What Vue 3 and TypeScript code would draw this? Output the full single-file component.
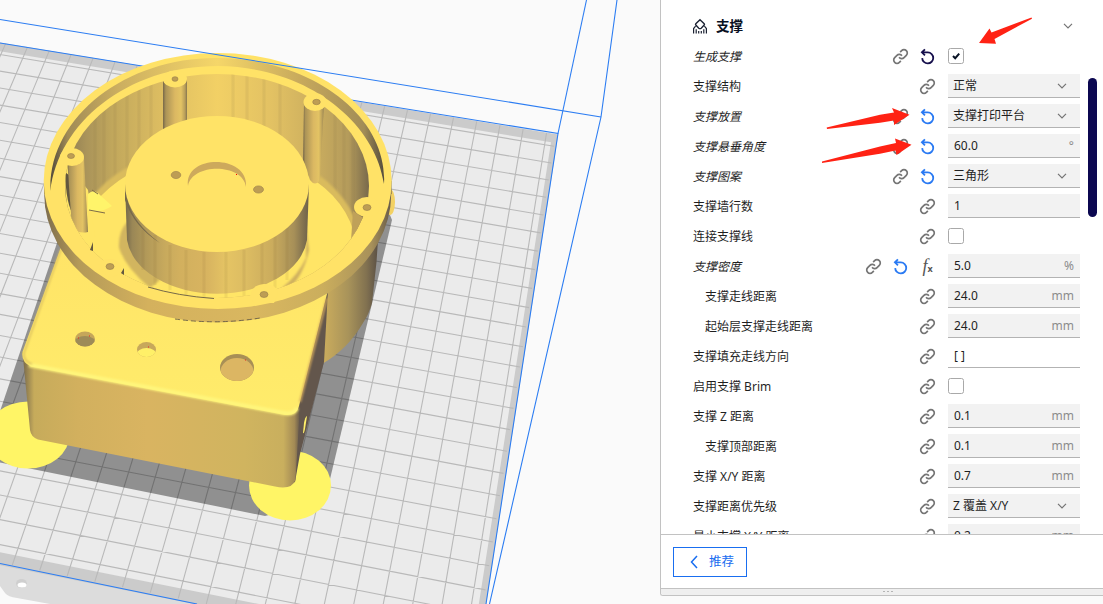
<script setup lang="ts">
type Point = [number, number]
type Icon = 'link' | 'undo' | 'undo-dark' | 'fx'
interface Setting {
  label: string
  kind: 'check' | 'select' | 'input' | 'plain'
  icons: Icon[]
  value?: string
  unit?: string
  checked?: boolean
  changed?: boolean
  child?: boolean
}

const settings: Setting[] = [
  { label: '生成支撑', kind: 'check', icons: ['link', 'undo-dark'], checked: true, changed: true },
  { label: '支撑结构', kind: 'select', icons: ['link'], value: '正常' },
  { label: '支撑放置', kind: 'select', icons: ['link', 'undo'], value: '支撑打印平台', changed: true },
  { label: '支撑悬垂角度', kind: 'input', icons: ['link', 'undo'], value: '60.0', unit: '°', changed: true },
  { label: '支撑图案', kind: 'select', icons: ['link', 'undo'], value: '三角形', changed: true },
  { label: '支撑墙行数', kind: 'input', icons: ['link'], value: '1' },
  { label: '连接支撑线', kind: 'check', icons: ['link'] },
  { label: '支撑密度', kind: 'input', icons: ['link', 'undo', 'fx'], value: '5.0', unit: '%', changed: true },
  { label: '支撑走线距离', kind: 'input', icons: ['link'], value: '24.0', unit: 'mm', child: true },
  { label: '起始层支撑走线距离', kind: 'input', icons: ['link'], value: '24.0', unit: 'mm', child: true },
  { label: '支撑填充走线方向', kind: 'plain', icons: ['link'], value: '[ ]' },
  { label: '启用支撑 Brim', kind: 'check', icons: ['link'] },
  { label: '支撑 Z 距离', kind: 'input', icons: ['link'], value: '0.1', unit: 'mm' },
  { label: '支撑顶部距离', kind: 'input', icons: ['link'], value: '0.1', unit: 'mm', child: true },
  { label: '支撑 X/Y 距离', kind: 'input', icons: ['link'], value: '0.7', unit: 'mm' },
  { label: '支撑距离优先级', kind: 'select', icons: ['link'], value: 'Z 覆盖 X/Y' },
  { label: '最小支撑 X/Y 距离', kind: 'input', icons: ['link'], value: '0.2', unit: 'mm' },
]

// Build plate in perspective: four grid nodes fix the projection of the whole grid.
function cross(a: Point, b: Point, c: Point, d: Point): Point {
  const den = (a[0] - b[0]) * (c[1] - d[1]) - (a[1] - b[1]) * (c[0] - d[0])
  const p = a[0] * b[1] - a[1] * b[0]
  const q = c[0] * d[1] - c[1] * d[0]
  return [(p * (c[0] - d[0]) - (a[0] - b[0]) * q) / den, (p * (c[1] - d[1]) - (a[1] - b[1]) * q) / den]
}
const far: [Point, Point] = [[0, 54.5], [553, 146]]
const near: [Point, Point] = [[0, 495], [491, 591]]
const left: [Point, Point] = [[181.7, 72.3], [12.3, 565]]
const right: [Point, Point] = [[546.7, 131.5], [471.7, 603]]
const p0 = cross(...far, ...left)
const p1 = cross(...far, ...right)
const p2 = cross(...near, ...right)
const p3 = cross(...near, ...left)
const sx = p0[0] - p1[0] + p2[0] - p3[0]
const sy = p0[1] - p1[1] + p2[1] - p3[1]
const dx1 = p1[0] - p2[0], dx2 = p3[0] - p2[0]
const dy1 = p1[1] - p2[1], dy2 = p3[1] - p2[1]
const det = dx1 * dy2 - dx2 * dy1
const g = (sx * dy2 - dx2 * sy) / det
const h = (dx1 * sy - sx * dy1) / det
function project(u: number, v: number): string {
  const s = (u - 8) / 16
  const t = v / 22
  const w = g * s + h * t + 1
  const x = ((p1[0] - p0[0] + g * p1[0]) * s + (p3[0] - p0[0] + h * p3[0]) * t + p0[0]) / w
  const y = ((p1[1] - p0[1] + g * p1[1]) * s + (p3[1] - p0[1] + h * p3[1]) * t + p0[1]) / w
  return `${x.toFixed(1)} ${y.toFixed(1)}`
}
function quad(u0: number, v0: number, u1: number, v1: number): string {
  return `M${project(u0, v0)}L${project(u1, v0)}L${project(u1, v1)}L${project(u0, v1)}Z`
}
const plate = quad(-12, -0.73, 24.5, 24.8)
const plateInner = quad(-12, -0.2, 24.25, 24.3)
let grid = ''
for (let u = -10; u <= 24; u++) grid += `M${project(u, -0.7)}L${project(u, 24.7)}`
for (let v = 0; v <= 24; v++) grid += `M${project(-12, v)}L${project(24.4, v)}`
</script>

<template>
  <div class="app">
    <svg class="scene" viewBox="0 0 660 604" width="660" height="604">
      <defs>
        <linearGradient id="wall" gradientUnits="userSpaceOnUse" x1="65" y1="0" x2="370" y2="0">
          <stop offset="0" stop-color="#8d7b52" /><stop offset=".07" stop-color="#aa945a" />
          <stop offset=".16" stop-color="#c2a85c" /><stop offset=".3" stop-color="#dabb61" />
          <stop offset=".5" stop-color="#f2d065" /><stop offset=".68" stop-color="#e2c163" />
          <stop offset=".8" stop-color="#cfb15f" /><stop offset=".93" stop-color="#b49b5b" />
          <stop offset="1" stop-color="#75674b" />
        </linearGradient>
        <linearGradient id="drum" gradientUnits="userSpaceOnUse" x1="125" y1="0" x2="309" y2="0">
          <stop offset="0" stop-color="#74684b" /><stop offset=".04" stop-color="#9a8756" />
          <stop offset=".12" stop-color="#b39a59" /><stop offset=".22" stop-color="#c8aa5d" />
          <stop offset=".3" stop-color="#d2b05e" /><stop offset=".45" stop-color="#d8b460" />
          <stop offset=".55" stop-color="#e5c464" /><stop offset=".66" stop-color="#dcbc62" />
          <stop offset=".8" stop-color="#cbac5d" /><stop offset=".92" stop-color="#a68f58" />
          <stop offset="1" stop-color="#6c604a" />
        </linearGradient>
        <linearGradient id="rimside" gradientUnits="userSpaceOnUse" x1="44" y1="0" x2="392" y2="0">
          <stop offset="0" stop-color="#7c6c4d" /><stop offset=".1" stop-color="#b49a58" />
          <stop offset=".3" stop-color="#d4b15d" /><stop offset=".6" stop-color="#d9b760" />
          <stop offset=".8" stop-color="#cbae5d" /><stop offset=".94" stop-color="#a8915a" />
          <stop offset="1" stop-color="#655948" />
        </linearGradient>
        <linearGradient id="groove" gradientUnits="userSpaceOnUse" x1="51" y1="0" x2="384" y2="0">
          <stop offset="0" stop-color="#554d3d" /><stop offset=".05" stop-color="#a08b56" />
          <stop offset=".2" stop-color="#cbae60" /><stop offset=".5" stop-color="#f5d669" />
          <stop offset=".75" stop-color="#c7a95c" /><stop offset=".94" stop-color="#a28d57" />
          <stop offset="1" stop-color="#554d3d" />
        </linearGradient>
        <linearGradient id="body" gradientUnits="userSpaceOnUse" x1="325" y1="0" x2="377" y2="0">
          <stop offset="0" stop-color="#c9ab5d" /><stop offset=".45" stop-color="#a8935a" />
          <stop offset=".8" stop-color="#817150" /><stop offset="1" stop-color="#5e5346" />
        </linearGradient>
        <linearGradient id="front" gradientUnits="userSpaceOnUse" x1="23" y1="0" x2="300" y2="0">
          <stop offset="0" stop-color="#796a4b" /><stop offset=".04" stop-color="#c6ab5b" />
          <stop offset=".2" stop-color="#d2b05e" /><stop offset=".45" stop-color="#d9b461" />
          <stop offset=".8" stop-color="#d0b45f" /><stop offset=".94" stop-color="#c9af5e" />
          <stop offset=".98" stop-color="#a38a55" /><stop offset="1" stop-color="#65584b" />
        </linearGradient>
        <linearGradient id="post" x1="0" x2="1" y1="0" y2="0">
          <stop offset="0" stop-color="#776849" /><stop offset=".12" stop-color="#ac9457" />
          <stop offset=".5" stop-color="#dbb862" /><stop offset=".75" stop-color="#e3c364" />
          <stop offset=".92" stop-color="#b79d5a" /><stop offset="1" stop-color="#85754f" />
        </linearGradient>
        <linearGradient id="top" x1="0" x2="0" y1="0" y2="1">
          <stop offset="0" stop-color="#ffe367" /><stop offset="1" stop-color="#ffec6b" />
        </linearGradient>
        <clipPath id="cavity"><ellipse cx="217" cy="186" rx="152" ry="112" /></clipPath>
        <clipPath id="hole1"><ellipse cx="85" cy="339" rx="10" ry="7.5" /></clipPath>
        <clipPath id="hole2"><ellipse cx="146.500" cy="349.500" rx="9.500" ry="7.500" /></clipPath>
        <clipPath id="hole3"><ellipse cx="237" cy="367.500" rx="17" ry="13.500" /></clipPath>
        <filter id="soft"><feGaussianBlur stdDeviation="1.3" /></filter>
      </defs>

      <!-- build plate -->
      <path d="M0 560 210 604H50L17 598Q8 597 5 593L0 586Z" fill="#dcdcdc" />
      <ellipse cx="21.500" cy="583.500" rx="5.500" ry="4.500" fill="#cfcfcf" />
      <ellipse cx="22" cy="585" rx="4.500" ry="2.500" fill="#fff" />
      <path :d="plate" fill="#cbcbcb" />
      <path :d="plateInner" fill="#ebebeb" />
      <path :d="grid" stroke="#b9b9b9" stroke-width="1.100" fill="none" />
      <path d="M58 240 -3 420V462L265 516 325 500 392 220 380 190Z" fill="#000" fill-opacity=".39" />
      <g stroke="#2c7df2" stroke-width="1.100" fill="none">
        <path d="M0 43 558 133.500 486 604" />
        <path d="M586.500 0 558 133.500" />
        <path d="M617 0 601 117 489.500 604" />
        <path d="M0 563.500 197 604" />
      </g>

      <!-- brim discs -->
      <ellipse cx="28" cy="435" rx="41.500" ry="33.500" fill="#fff566" />
      <ellipse cx="290" cy="485.500" rx="41" ry="35" fill="#fff566" />

      <!-- cylinder below the rim -->
      <path d="M300 240H378L376.500 262 372 303Q369 314 363 323 348 349 322 364L300 370Z" fill="url(#body)" />

      <!-- box -->
      <path d="M328 290 324 362 300 454 295 482 290 484 296 410 320 300Z" fill="#63564c" />
      <path d="M304 423Q305 417 307 416L305 429Q304 434 303 433Z" fill="#fff06a" />
      <path d="M22.500 352 30 430Q31 437 38 439.500L275 486.500Q292 490 295.500 480L300 405Z" fill="url(#front)" />
      <path d="M61 247 22.500 352Q21 362 31 366.500L285 415Q297 416 299 406L328 290 300 230H80Z" fill="url(#top)" />
      <path d="M29 365 284 413Q294 415 297 408" fill="none" stroke="#fff67c" stroke-width="4" filter="url(#soft)" />
      <path d="M61 249 24 353Q23 361 32 364" fill="none" stroke="#d9bd5e" stroke-width="1.500" filter="url(#soft)" />
      <path d="M327 298 300 402" fill="none" stroke="#d6ab5c" stroke-width="2" filter="url(#soft)" />

      <g clip-path="url(#hole1)"><path d="M70 328H100V350H70Z" fill="#c5a65a" /><ellipse cx="85" cy="344" rx="11" ry="8" fill="#9d8b58" /></g>
      <g clip-path="url(#hole2)"><path d="M130 338H160V360H130Z" fill="#c7a85b" /><ellipse cx="146.500" cy="355" rx="10" ry="7" fill="#fff068" /></g>
      <g clip-path="url(#hole3)"><path d="M218 352H256V384H218Z" fill="#a88f56" /><ellipse cx="237" cy="372" rx="16.500" ry="14" fill="#dcb663" /></g>
      <path d="M78 338h1M89 336h1M148 347h1M245 360h1" stroke="#e22" stroke-width="1" />

      <!-- rim -->
      <ellipse cx="390" cy="202" rx="5" ry="13" fill="#f3d162" />
      <ellipse cx="217.700" cy="194" rx="173.500" ry="128.500" fill="url(#rimside)" />
      <path d="M44 181H391.500V194H44Z" fill="url(#rimside)" />
      <path d="M175 319Q217 325 260 318" fill="none" stroke="#5c5444" stroke-width=".8" stroke-dasharray="5 3" />
      <ellipse cx="217.700" cy="181" rx="174" ry="128" fill="#ffe267" />
      <path d="M50.500 191C48 117 126 57 218 58 315 59 388 118 384 184 375 122 308 67 218 66 126 66 58 124 50.500 191Z" fill="url(#groove)" />

      <!-- cavity -->
      <g clip-path="url(#cavity)">
        <path d="M60 70H375V305H60Z" fill="url(#wall)" />
        <path d="M95 95V200M104 88V195M115 84V180M127 80V170M139 78V160M151 76V150M233 70V150M247 70V150M264 74V150M280 78V160M335 110V200M344 120V210M353 130V220" stroke="#7c6840" stroke-opacity=".1" stroke-width="3" />
        <ellipse cx="217" cy="246" rx="143" ry="101" fill="#d9bb5d" filter="url(#soft)" />
        <ellipse cx="217" cy="250" rx="139" ry="98" fill="#ffe566" />
        <path d="M65 160Q62 240 100 270L94 230 88 190Z" fill="#ffe566" />
        <path d="M88 194Q94 188 100 195L112 206Q100 214 88 210Z" fill="#fff46a" />
        <path d="M89 210 105 213M92 190 98 194" stroke="#7c6b48" stroke-width="1" />
        <path d="M127 222Q118 232 119 248 126 268 150 288L160 280Z" fill="#d2b55e" filter="url(#soft)" />
        <path d="M306 225V258Q298 275 282 288L288 290Q304 275 309 250Z" fill="#cfb05e" filter="url(#soft)" />
        <path d="M163 79H187V140H163Z" fill="url(#post)" />
        <path d="M304 102H324L320 180Q315 187 310 180L303 160Z" fill="url(#post)" />
        <path d="M125 184H309L307 240A90.500 60 0 0 1 127 240Z" fill="url(#drum)" />
        <path d="M143 230V270M155 235V285M170 245V290M186 250V296M204 252V298M226 252V298M244 250V298M262 242V292M275 235V288M287 225V280" stroke="#7c6335" stroke-opacity=".1" stroke-width="3" />
        <path d="M125 184V200Q134 227 160 243 134 224 128 202Z" fill="#76694b" />
        <path d="M65 172 70 176 74 216Q66 205 65 172Z" fill="#62573f" />
        <path d="M67 158H84L88 232Q80 234 72 229Z" fill="url(#post)" />
        <path d="M353 211 351 241Q360 232 365 219Z" fill="#bfa159" />
      </g>
      <path d="M148 287Q178 296 214 298.500" stroke="#695d45" stroke-width=".9" fill="none" />
      <ellipse cx="217" cy="184" rx="92" ry="68" fill="#ffe367" />
      <path d="M188 186C184 154 249 154 246 187 243 163 192 163 188 186Z" fill="#cda95c" />
      <g fill="#ffe267">
        <ellipse cx="175" cy="79" rx="12" ry="8.500" />
        <ellipse cx="315" cy="102" rx="11.500" ry="9" />
        <ellipse cx="72" cy="157" rx="12" ry="9" />
        <ellipse cx="367" cy="207" rx="13" ry="10" />
        <path d="M250 299Q250 285 264 284 277 284 278 294L274 303H255Z" />
        <path d="M98 268Q99 259 110 259 122 259 122 273L110 278Z" />
      </g>
      <path d="M90 250 93 242V251ZM121 273 124 268V275Z" fill="#635840" />
      <g fill="#bd9d54" stroke="#977e4b" stroke-width=".6">
        <ellipse cx="175" cy="79" rx="3" ry="2.300" /><ellipse cx="316.500" cy="102" rx="3.800" ry="2.700" />
        <ellipse cx="71" cy="156" rx="3.500" ry="2.500" /><ellipse cx="367" cy="207.500" rx="4" ry="3" />
        <ellipse cx="110" cy="266.500" rx="4" ry="3" /><ellipse cx="264" cy="294.500" rx="4" ry="3" />
        <ellipse cx="176" cy="175" rx="4.800" ry="3.600" /><ellipse cx="258.500" cy="189.500" rx="5" ry="3.600" />
      </g>
      <path d="M236 174.500h1" stroke="#f00" />
      <path d="M0 19.500 601 117" stroke="#2c7df2" stroke-width="1.100" />
    </svg>

    <aside class="panel">
      <div class="content">
        <header class="head">
          <svg class="category" viewBox="0 0 16 16" width="16" height="16" fill="none" stroke="#1b2233" stroke-width="1.400">
            <path d="M8 1.700 12.200 5.700Q12.800 6.400 12.200 7.100L9.200 10.200Q8 11.100 6.800 10.200L3.800 7.100Q3.200 6.400 3.800 5.700Z" />
            <path d="M1.600 15.500V10.500L3.600 8.200M14.400 15.500V10.500L12.400 8.200M4.200 15.500V11.300M11.800 15.500V11.300M6.700 15.500V13M9.300 15.500V13" stroke-width="1.200" />
          </svg>
          <h2>支撑</h2>
          <svg class="chevron" viewBox="0 0 10 6" width="10" height="6"><path d="M1 .8 5 4.800 9 .8" /></svg>
        </header>
        <div v-for="row in settings" :key="row.label" class="row">
          <span class="label" :class="{ changed: row.changed, child: row.child }">{{ row.label }}</span>
          <span v-for="icon in row.icons" :key="icon" class="icon" :class="icon">
            <svg v-if="icon === 'link'" viewBox="0 0 24 24" width="17" height="17">
              <path d="M10 13a4.600 4.600 0 0 0 7 .6l3.200-3.200a4.600 4.600 0 0 0-6.600-6.600L11.500 5.900M14 11a4.600 4.600 0 0 0-7-.6L3.800 13.600a4.600 4.600 0 0 0 6.600 6.600L12.500 18.100" stroke-width="2.400" />
            </svg>
            <span v-else-if="icon === 'fx'" class="fn">f<b>x</b></span>
            <svg v-else viewBox="0 0 16 16" width="17" height="17">
              <path d="M5.600 1.200 2.700 4.100 5.600 7M2.800 4.100H8.300A5.200 5.200 0 1 1 3 9.500" stroke-width="1.700" />
            </svg>
          </span>
          <span class="cell">
            <span v-if="row.kind === 'check'" class="box">
              <svg v-if="row.checked" viewBox="0 0 8 8" width="8" height="8"><path d="M1 4 3.200 6.200 7.200 1.600" /></svg>
            </span>
            <span v-else class="field" :class="row.kind">
              <span>{{ row.value }}</span>
              <svg v-if="row.kind === 'select'" class="chevron" viewBox="0 0 10 6" width="10" height="6"><path d="M1 .8 5 4.800 9 .8" /></svg>
              <span v-else class="unit">{{ row.unit }}</span>
            </span>
          </span>
        </div>
        <div class="scroll"></div>
      </div>
      <footer class="foot">
        <button class="back">
          <svg viewBox="0 0 8 14" width="8" height="14"><path d="M7 1 1.500 7 7 13" /></svg>
          <span>推荐</span>
        </button>
      </footer>
      <div class="grip"><i></i><i></i><i></i></div>
    </aside>

    <svg class="arrows" viewBox="0 0 1103 604" width="1103" height="604">
      <path d="M979 43 989.500 28.500 991.500 32.500 1031.500 17.500 1032 18.700 994.500 39 996 43.700Z" />
      <path d="M826.700 127.500 880 114.700 894 112.500 892 108 909.500 114.700 894 125 894 120.500 880 122.700 827 129Z" />
      <path d="M822 161.500 880 146.500 896 143 895 138.500 911.500 144.700 896.500 155 895.500 150.500 880 153.700 822 163Z" />
    </svg>
  </div>
</template>

<style>
body { margin: 0; overflow: hidden; }
</style>

<style scoped>
.app {
  position: relative;
  display: flex;
  width: 1103px;
  height: 604px;
  overflow: hidden;
  background: #fafafa;
  font: 12px/16px "Noto Sans", "Noto Sans CJK SC", sans-serif;
  color: #1f1f1f;
}
.scene { flex: none; display: block; }
.panel {
  flex: 1;
  box-sizing: border-box;
  height: 596px;
  display: flex;
  flex-direction: column;
  background: #fff;
  border-left: 1px solid #c2c2c2;
  border-bottom: 1px solid #c2c2c2;
  border-bottom-left-radius: 3px;
  overflow: hidden;
}
.content {
  position: relative;
  box-sizing: border-box;
  height: 534px;
  padding: 11px 23px 0 32px;
  overflow: hidden;
}
.head { display: flex; align-items: center; height: 30px; }
.category { margin-left: -1px; }
.head h2 { flex: 1; margin: 0 0 0 8px; font-size: 13.5px; font-weight: 700; color: #08101f; }
.head .chevron { margin-right: 7px; }
.chevron { fill: none; stroke: #747474; stroke-width: 1.2; }
.row { display: flex; align-items: center; height: 30px; }
.label { flex: 1; padding-top: 1px; white-space: nowrap; }
.changed { font-style: italic; }
.child { padding-left: 12px; }
.icon {
  display: flex;
  align-items: center;
  justify-content: center;
  width: 17px;
  height: 17px;
  margin-left: 10px;
  color: #757575;
}
.icon svg { fill: none; stroke: currentColor; }
.undo { color: #2a7af3; }
.undo-dark { color: #160f4c; }
.fn { font: italic 18px/17px "Liberation Serif", serif; color: #555; white-space: nowrap; }
.fn b { font: bold 9px/9px "Noto Sans", sans-serif; }
.cell { width: 132px; margin-left: 12px; }
.box {
  box-sizing: border-box;
  display: flex;
  align-items: center;
  justify-content: center;
  width: 16px;
  height: 16px;
  border: 1px solid #a9a9a9;
  border-radius: 2.5px;
}
.box svg { fill: none; stroke: #091325; stroke-width: 2; }
.field {
  box-sizing: border-box;
  display: flex;
  align-items: center;
  justify-content: space-between;
  height: 24px;
  padding: 0 6px;
  background: #f2f2f2;
  border-bottom: 1px solid #b3b3b3;
}
.select { padding: 1px 13px 0 5px; }
.plain { background: #fff; }
.unit { color: #8c8c8c; }
.scroll {
  position: absolute;
  left: 427px;
  top: 78px;
  width: 9px;
  height: 139px;
  border-radius: 5px;
  background: #0b0750;
}
.foot {
  box-sizing: border-box;
  height: 54px;
  padding: 12px 12px 0;
  border-top: 1px solid #c2c2c2;
}
.back {
  box-sizing: border-box;
  display: flex;
  align-items: center;
  gap: 11px;
  width: 74px;
  height: 30px;
  padding: 0 0 0 16px;
  background: #fff;
  border: 1px solid #196ef0;
  border-radius: 0;
  color: #196ef0;
  font: inherit;
  font-size: 12.5px;
}
.back svg { fill: none; stroke: currentColor; stroke-width: 1.5; }
.grip {
  box-sizing: border-box;
  flex: 1;
  display: flex;
  justify-content: center;
  gap: 2px;
  padding: 2px 0 0 12px;
  background: #efefef;
  border-top: 1px solid #c2c2c2;
}
.grip i { width: 2px; height: 1px; background: #b5b5b5; }
.arrows { position: absolute; left: 0; top: 0; fill: #ff2214; }
</style>
